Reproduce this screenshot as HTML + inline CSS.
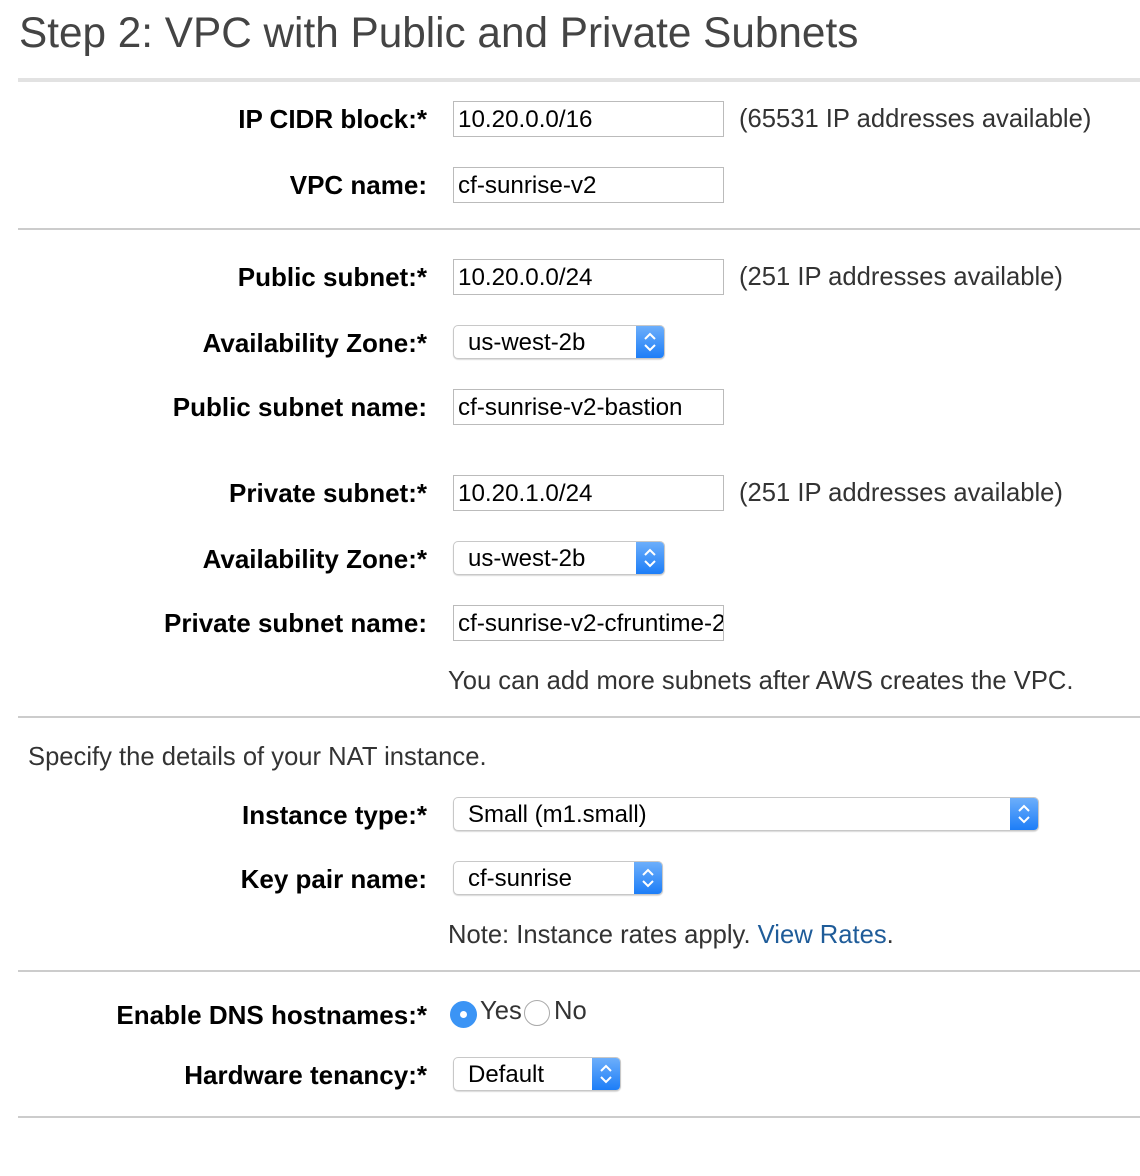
<!DOCTYPE html>
<html><head><meta charset="utf-8"><style>
body{margin:0;width:1140px;height:1176px;background:#fff;position:relative;overflow:hidden;font-family:"Liberation Sans",Arial,sans-serif}
.a{position:absolute;white-space:nowrap}
.t{left:19px;top:8px;font-size:42.3px;color:#444;line-height:50px}
.hr{position:absolute;left:18px;width:1122px;height:2px;background:#ccc}
.l{right:713px;font-size:26px;font-weight:bold;color:#000;line-height:38px;text-align:right}
.in{position:absolute;left:453px;border:1px solid #bbb;font-size:24.2px;line-height:35px;padding-left:4px;box-sizing:border-box;width:271px;height:36px;overflow:hidden;white-space:nowrap;color:#000}
.n{font-size:25.6px;color:#333;line-height:38px}
.s{position:absolute;left:453px;height:34px;border:1px solid #c8c8c8;border-radius:5px;box-sizing:border-box;box-shadow:0 1px 1px rgba(0,0,0,.15);font-size:24px;line-height:33px;padding-left:14px;color:#000;background:#fff;overflow:hidden;white-space:nowrap}
.s i{position:absolute;right:-1px;top:-1px;width:29px;height:34px;background:linear-gradient(#6fb0fb,#1a7cf7);border-radius:0 5px 5px 0}
.s i svg{position:absolute;left:7px;top:7px}
</style></head><body>
<div class="a t">Step 2: VPC with Public and Private Subnets</div>
<div class="hr" style="top:78px;height:4px;background:#e2e2e2"></div>

<div class="a l" style="top:100px">IP CIDR block:*</div>
<div class="in" style="top:101px">10.20.0.0/16</div>
<div class="a n" style="left:739px;top:100px">(65531 IP addresses available)</div>
<div class="a l" style="top:166px">VPC name:</div>
<div class="in" style="top:167px">cf-sunrise-v2</div>
<div class="hr" style="top:228px"></div>

<div class="a l" style="top:258px">Public subnet:*</div>
<div class="in" style="top:259px">10.20.0.0/24</div>
<div class="a n" style="left:739px;top:258px">(251 IP addresses available)</div>
<div class="a l" style="top:324px">Availability Zone:*</div>
<div class="s" style="top:325px;width:212px">us-west-2b<i><svg width="14" height="20" viewBox="0 0 14 20"><path d="M2 7L7 2L12 7M2 13L7 18L12 13" stroke="#fff" stroke-width="2" fill="none"/></svg></i></div>
<div class="a l" style="top:388px">Public subnet name:</div>
<div class="in" style="top:389px">cf-sunrise-v2-bastion</div>

<div class="a l" style="top:474px">Private subnet:*</div>
<div class="in" style="top:475px">10.20.1.0/24</div>
<div class="a n" style="left:739px;top:474px">(251 IP addresses available)</div>
<div class="a l" style="top:540px">Availability Zone:*</div>
<div class="s" style="top:541px;width:212px">us-west-2b<i><svg width="14" height="20" viewBox="0 0 14 20"><path d="M2 7L7 2L12 7M2 13L7 18L12 13" stroke="#fff" stroke-width="2" fill="none"/></svg></i></div>
<div class="a l" style="top:604px">Private subnet name:</div>
<div class="in" style="top:605px">cf-sunrise-v2-cfruntime-2</div>
<div class="a n" style="left:448px;top:662px">You can add more subnets after AWS creates the VPC.</div>
<div class="hr" style="top:716px"></div>

<div class="a n" style="left:28px;top:738px">Specify the details of your NAT instance.</div>
<div class="a l" style="top:796px">Instance type:*</div>
<div class="s" style="top:797px;width:586px">Small (m1.small)<i><svg width="14" height="20" viewBox="0 0 14 20"><path d="M2 7L7 2L12 7M2 13L7 18L12 13" stroke="#fff" stroke-width="2" fill="none"/></svg></i></div>
<div class="a l" style="top:860px">Key pair name:</div>
<div class="s" style="top:861px;width:210px">cf-sunrise<i><svg width="14" height="20" viewBox="0 0 14 20"><path d="M2 7L7 2L12 7M2 13L7 18L12 13" stroke="#fff" stroke-width="2" fill="none"/></svg></i></div>
<div class="a n" style="left:448px;top:916px">Note: Instance rates apply. <span style="color:#1f5c99">View Rates</span>.</div>
<div class="hr" style="top:970px"></div>

<div class="a l" style="top:996px">Enable DNS hostnames:*</div>
<div class="a" style="left:450px;top:1001px;width:27px;height:27px;border-radius:50%;background:#3b94f5"><div style="position:absolute;left:10px;top:10px;width:7px;height:7px;border-radius:50%;background:#fff"></div></div>
<div class="a n" style="left:480px;top:992px">Yes</div>
<div class="a" style="left:524px;top:1000px;width:26px;height:26px;border-radius:50%;border:1px solid #aaa;box-sizing:border-box;background:#fff"></div>
<div class="a n" style="left:554px;top:992px">No</div>
<div class="a l" style="top:1056px">Hardware tenancy:*</div>
<div class="s" style="top:1057px;width:168px">Default<i><svg width="14" height="20" viewBox="0 0 14 20"><path d="M2 7L7 2L12 7M2 13L7 18L12 13" stroke="#fff" stroke-width="2" fill="none"/></svg></i></div>
<div class="hr" style="top:1116px"></div>
</body></html>
